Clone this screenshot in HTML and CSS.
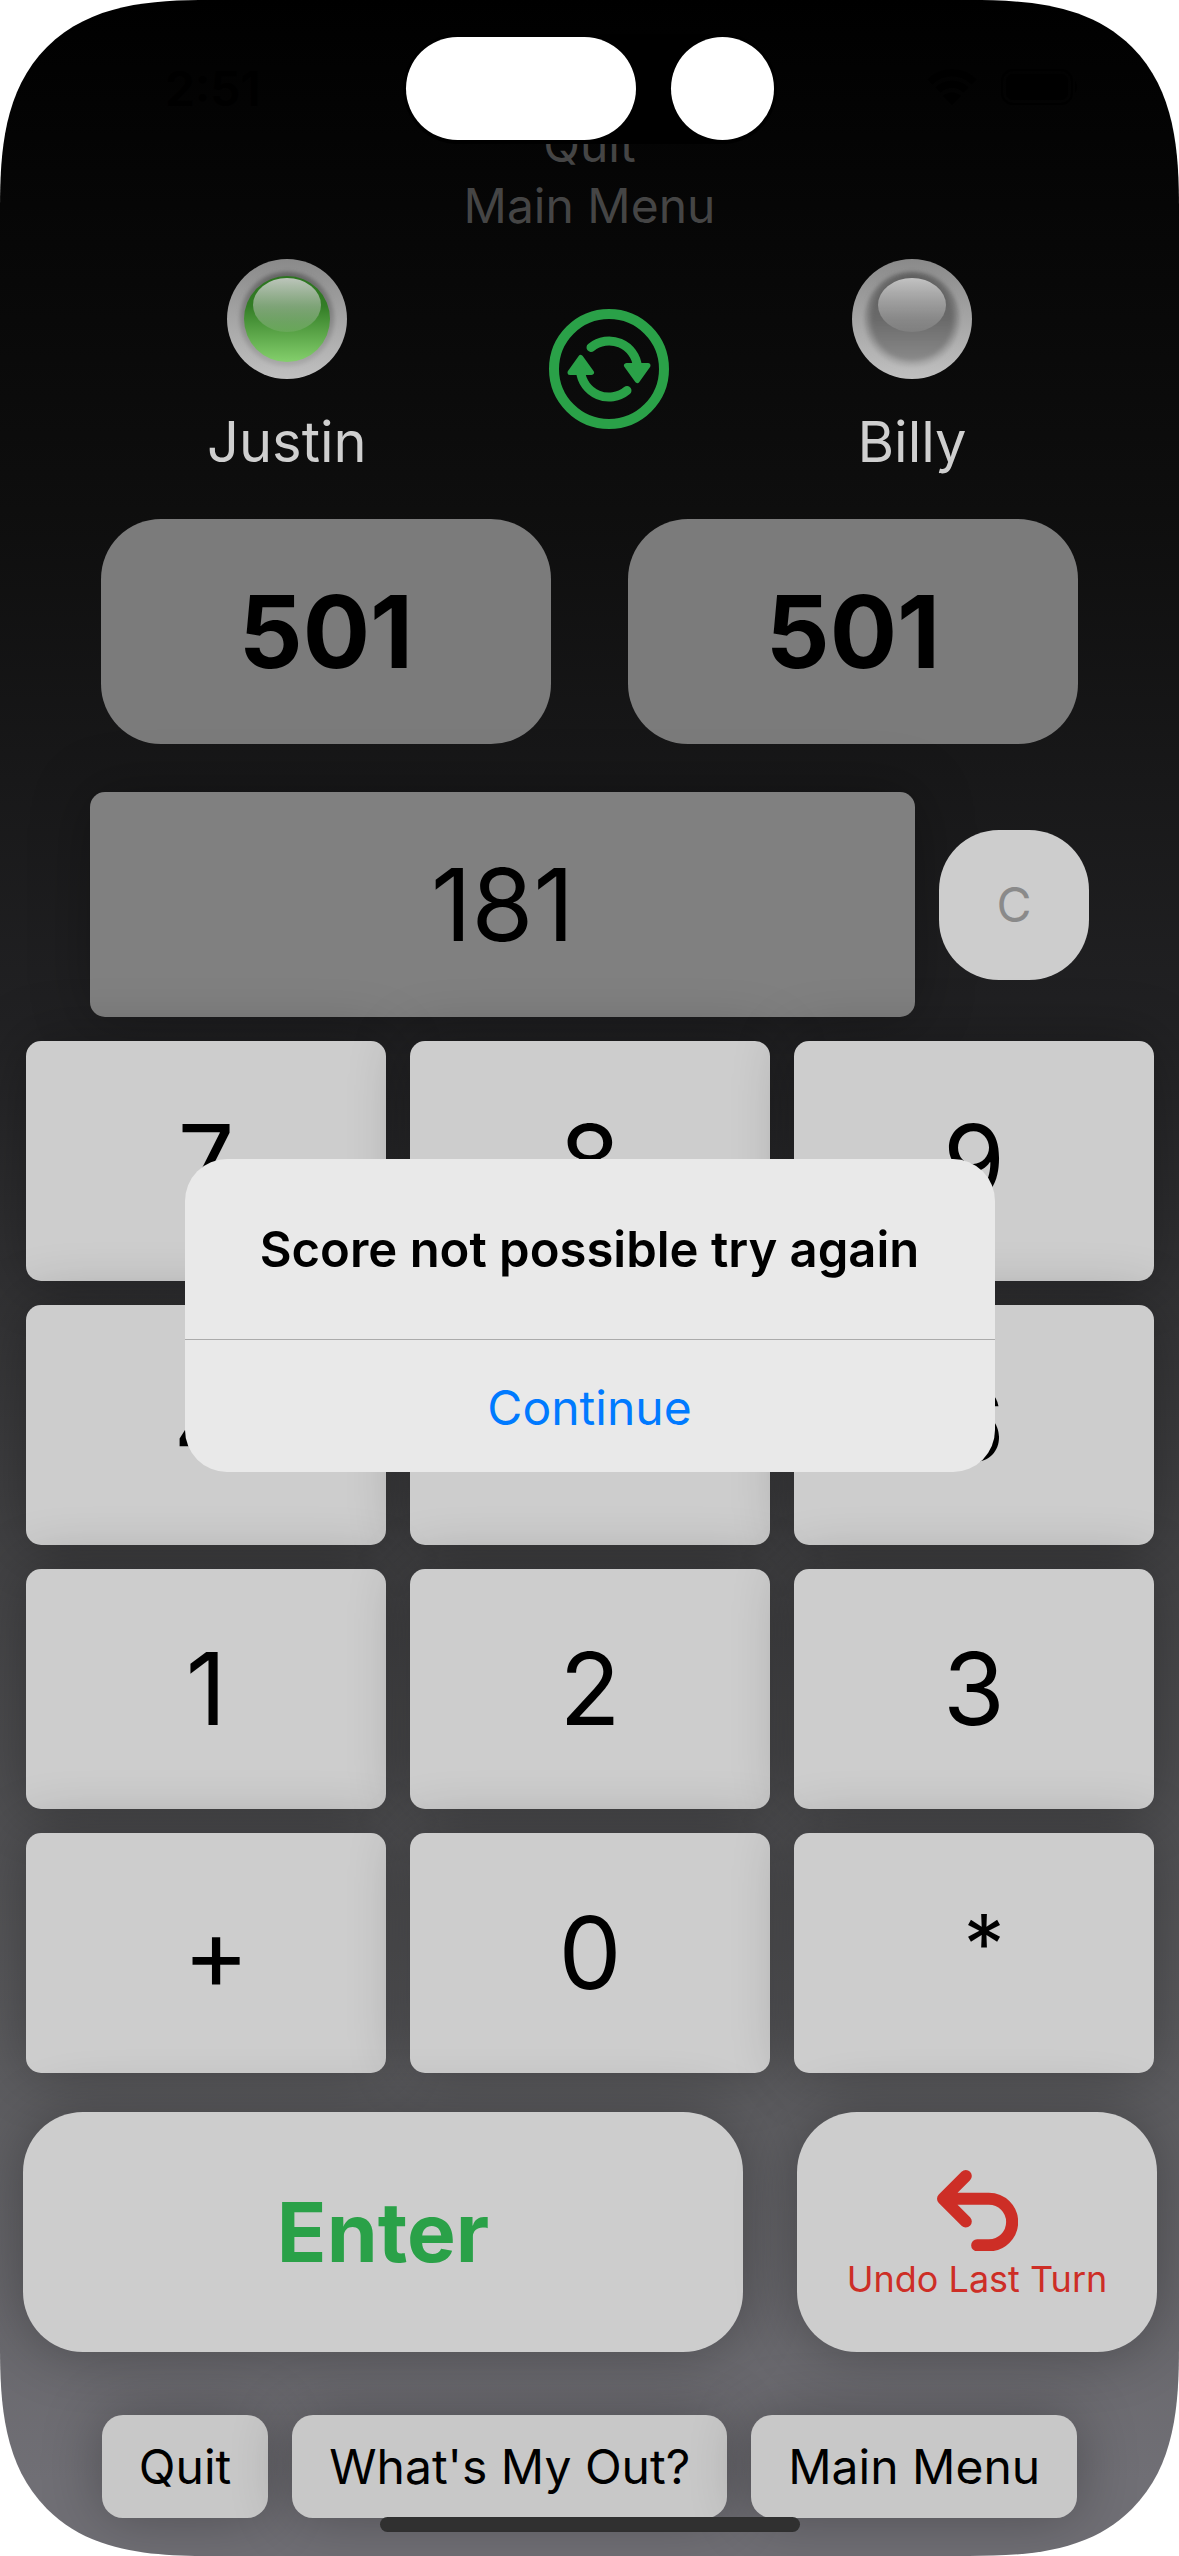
FILE: index.html
```html
<!DOCTYPE html>
<html lang="en">
<head>
  <meta charset="utf-8">
  <meta name="viewport" content="width=device-width, initial-scale=1">
  <title>501 Scoreboard</title>
  <link rel="stylesheet" href="styles.css">
</head>
<body>
  <div class="screen">
    <div class="status" aria-hidden="true">
      <span class="status__time">2:51</span>
      <span class="status__island"><span class="status__pill"></span><span class="status__lens"></span></span>
      <span class="status__icons">
        <svg class="status__wifi" viewBox="0 0 50 36"><path d="M3 13a31 31 0 0 1 44 0M11 21a20 20 0 0 1 28 0" fill="none" stroke="#000" stroke-width="7"/><path d="M16 27a13 13 0 0 1 18 0l-9 9z"/></svg>
        <svg class="status__battery" viewBox="0 0 78 36"><rect x="1" y="1" width="70" height="34" rx="11" fill="none" stroke="#000" stroke-width="2"/><rect x="5" y="5" width="62" height="26" rx="7"/><path d="M74 12q4 6 0 12z"/></svg>
      </span>
    </div>

    <header class="menu">
      <a class="menu__link" href="#quit">Quit</a>
      <a class="menu__link" href="#menu">Main Menu</a>
    </header>

    <section class="players">
      <div class="player">
        <svg class="led" viewBox="0 0 120 120" role="img" aria-label="Active">
          <defs>
            <linearGradient id="rim" x1="0" y1="0" x2="0" y2="1"><stop offset="0" stop-color="#8a8a8a"/><stop offset="1" stop-color="#c0c0c0"/></linearGradient>
            <linearGradient id="well" x1="0" y1="0" x2="0" y2="1"><stop offset="0" stop-color="#606060"/><stop offset="1" stop-color="#aaaaaa"/></linearGradient>
            <linearGradient id="on" x1="0" y1="0" x2="0" y2="1"><stop offset="0" stop-color="#2c741f"/><stop offset=".35" stop-color="#337d26"/><stop offset="1" stop-color="#84cf6c"/></linearGradient>
            <linearGradient id="off" x1="0" y1="0" x2="0" y2="1"><stop offset="0" stop-color="#5c5c5c"/><stop offset=".5" stop-color="#6a6a6a"/><stop offset="1" stop-color="#8a8a8a"/></linearGradient>
            <linearGradient id="shine" x1="0" y1="0" x2="0" y2="1"><stop offset="0" stop-color="#d0d0d0" stop-opacity=".88"/><stop offset="1" stop-color="#c8c8c8" stop-opacity=".14"/></linearGradient>
            <filter id="soft" x="-10%" y="-10%" width="120%" height="120%"><feGaussianBlur stdDeviation="2"/></filter>
          </defs>
          <circle cx="60" cy="60" r="60" fill="url(#rim)"/>
          <circle cx="60" cy="60" r="47" fill="url(#well)" filter="url(#soft)"/>
          <circle cx="60" cy="60" r="43" fill="url(#on)"/>
          <ellipse cx="60" cy="46" rx="34" ry="27" fill="url(#shine)"/>
        </svg>
        <span class="player__name">Justin</span>
      </div>
      <button class="swap" type="button" aria-label="Swap players">
        <svg viewBox="0 0 120 120">
          <circle cx="60" cy="60" r="55" fill="none" stroke="currentColor" stroke-width="10"/>
          <g id="half" fill="none" stroke="currentColor" stroke-linecap="round" stroke-linejoin="round">
            <path d="M42 38.5A28.5 28.5 0 0 1 88.500 58" stroke-width="9"/>
            <path d="M77.500 56.500H99L88.300 71.500z" fill="currentColor" stroke-width="5"/>
          </g>
          <use href="#half" transform="rotate(180 60 60)"/>
        </svg>
      </button>
      <div class="player">
        <svg class="led" viewBox="0 0 120 120" role="img" aria-label="Waiting">
          <circle cx="60" cy="60" r="60" fill="url(#rim)"/>
          <circle cx="60" cy="60" r="47" fill="url(#well)" filter="url(#soft)"/>
          <circle cx="60" cy="60" r="42" fill="url(#off)" filter="url(#soft)"/>
          <ellipse cx="60" cy="46" rx="34" ry="27" fill="url(#shine)"/>
        </svg>
        <span class="player__name">Billy</span>
      </div>
    </section>

    <section class="scores">
      <output class="score">501</output>
      <output class="score">501</output>
    </section>

    <section class="entry">
      <output class="entry__value">181</output>
      <button class="entry__clear" type="button">C</button>
    </section>

    <section class="keypad">
      <button class="key" type="button">7</button>
      <button class="key" type="button">8</button>
      <button class="key" type="button">9</button>
      <button class="key" type="button">4</button>
      <button class="key" type="button">5</button>
      <button class="key" type="button">6</button>
      <button class="key" type="button">1</button>
      <button class="key" type="button">2</button>
      <button class="key" type="button">3</button>
      <button class="key key--symbol" type="button">+</button>
      <button class="key" type="button">0</button>
      <button class="key key--symbol key--star" type="button">*</button>
    </section>

    <section class="actions">
      <button class="action action--enter" type="button">Enter</button>
      <button class="action action--undo" type="button">
        <svg class="action__icon" viewBox="108 90 242 242" fill="none" stroke="currentColor" stroke-width="36" stroke-linecap="round" stroke-linejoin="round"><path d="M194 108L126 176L194 244M126 176H263a69.500 69.500 0 0 1 0 139H228"/></svg>
        <span>Undo Last Turn</span>
      </button>
    </section>

    <nav class="footer">
      <button class="pill" type="button">Quit</button>
      <button class="pill" type="button">What's My Out?</button>
      <button class="pill" type="button">Main Menu</button>
    </nav>
    <span class="home"></span>

    <div class="overlay">
      <div class="alert" role="alertdialog" aria-labelledby="alert-title">
        <h1 class="alert__title" id="alert-title">Score not possible try again</h1>
        <button class="alert__button" type="button">Continue</button>
      </div>
    </div>
  </div>
</body>
</html>
```

FILE: styles.css
```css
* {
  box-sizing: border-box;
}

body {
  margin: 0;
  background: #fff;
  font-family: Inter, "Liberation Sans", sans-serif;
  font-size: 48px;
  line-height: 61px;
  color: #000;
}

button {
  margin: 0;
  padding: 0;
  border: 0;
  font: inherit;
  color: inherit;
}

.screen {
  position: relative;
  display: flex;
  flex-direction: column;
  min-height: 100vh;
  padding-bottom: 38px;
  overflow: hidden;
  border-radius: 168px;
  background: linear-gradient(#000 0%, #060606 8%, #0e0e0e 20%, #212123 40%, #414143 60%, #5b5b5e 80%, #706f75 97%);
}

@supports (corner-shape: superellipse(1.45)) {
  .screen {
    border-radius: 210px;
    corner-shape: superellipse(1.45);
  }
}

/* Status bar, lying over the scrolled menu */
.status {
  position: absolute;
  inset: 0 0 auto;
  height: 144px;
}

.status__time {
  position: absolute;
  left: 165px;
  top: 58px;
  font-weight: 600;
}

.status__island {
  position: absolute;
  left: 50%;
  top: 34px;
  display: flex;
  gap: 35px;
  padding: 3px;
  height: 110px;
  border-radius: 55px;
  background: #000;
  transform: translateX(-50%);
}

.status__pill,
.status__lens {
  width: 230px;
  height: 103px;
  border-radius: 52px;
  background: #fff;
}

.status__lens {
  width: 103px;
}

.status__icons {
  position: absolute;
  right: 100px;
  top: 69px;
  display: flex;
  gap: 24px;
}

.status__wifi {
  width: 50px;
  height: 36px;
}

.status__battery {
  width: 78px;
  height: 36px;
}

.menu {
  display: flex;
  flex-direction: column;
  align-items: center;
  padding: 114px 0 23px;
}

.menu__link {
  color: #454545;
  text-decoration: none;
}

.players {
  display: flex;
  justify-content: space-between;
  align-items: center;
  padding: 0 207px;
}

.player {
  display: flex;
  flex-direction: column;
  align-items: center;
  gap: 27px;
}

.led {
  width: 120px;
  height: 120px;
}

.player__name {
  font-size: 56px;
  line-height: 72px;
  color: #cfcfcf;
}

.swap {
  width: 120px;
  height: 120px;
  background: none;
  color: #2aa148;
}

.swap svg {
  display: block;
}

.scores {
  display: grid;
  grid-template-columns: 1fr 1fr;
  gap: 77px;
  padding: 41px 101px 48px;
}

.score {
  height: 225px;
  border-radius: 60px;
  background: #7b7b7b;
  font-size: 100px;
  font-weight: 700;
  line-height: 225px;
  text-align: center;
}

.entry {
  display: flex;
  align-items: center;
  gap: 24px;
  padding: 0 90px 24px;
}

.entry__value {
  flex: 1;
  height: 225px;
  border-radius: 15px;
  background: #808080;
  box-shadow: 0 0 60px rgba(0, 0, 0, 0.3);
  font-size: 100px;
  line-height: 225px;
  text-align: center;
}

.entry__clear {
  width: 150px;
  height: 150px;
  border-radius: 60px;
  background: #cdcdcd;
  color: #8a8a8a;
}

.keypad {
  display: grid;
  grid-template-columns: repeat(3, 1fr);
  gap: 24px;
  padding: 0 25px 39px 26px;
}

.key {
  height: 240px;
  border-radius: 15px;
  background: #cdcdcd;
  box-shadow: 0 0 60px rgba(0, 0, 0, 0.3);
  font-size: 100px;
  line-height: 120px;
}

.key--symbol {
  padding-left: 20px;
}

.key--star {
  padding-bottom: 16px;
  font-size: 82px;
}

.actions {
  display: grid;
  grid-template-columns: 2fr 1fr;
  gap: 54px;
  padding: 0 22px 63px 23px;
}

.action {
  height: 240px;
  border-radius: 60px;
  background: #cdcdcd;
  box-shadow: 0 0 60px rgba(0, 0, 0, 0.3);
}

.action--enter {
  font-size: 82px;
  font-weight: 700;
  color: #2aa148;
}

.action--undo {
  display: flex;
  flex-direction: column;
  align-items: center;
  justify-content: center;
  gap: 6px;
  padding-top: 6px;
  font-size: 36px;
  line-height: 44px;
  color: #cd2e26;
}

.action__icon {
  width: 81px;
  height: 81px;
}

.footer {
  display: flex;
  justify-content: center;
  gap: 24px;
}

.pill {
  padding: 21px 37px;
  border-radius: 21px;
  background: #c8c8c8;
  box-shadow: 0 0 60px rgba(0, 0, 0, 0.3);
  white-space: nowrap;
}

.home {
  position: absolute;
  left: 50%;
  bottom: 24px;
  width: 420px;
  height: 15px;
  border-radius: 8px;
  background: #303030;
  transform: translateX(-50%);
}

.overlay {
  position: absolute;
  inset: 0;
  display: flex;
  align-items: center;
  justify-content: center;
  padding-top: 74px;
}

.alert {
  width: 810px;
  overflow: hidden;
  border-radius: 42px;
  background: #e9e9e9;
}

.alert__title {
  margin: 0;
  padding: 60px 48px 59px;
  border-bottom: 1px solid #ababab;
  font-size: 49px;
  font-weight: 600;
  text-align: center;
}

.alert__button {
  display: block;
  width: 100%;
  height: 132px;
  padding-top: 4px;
  background: none;
  color: #007aff;
}
```
